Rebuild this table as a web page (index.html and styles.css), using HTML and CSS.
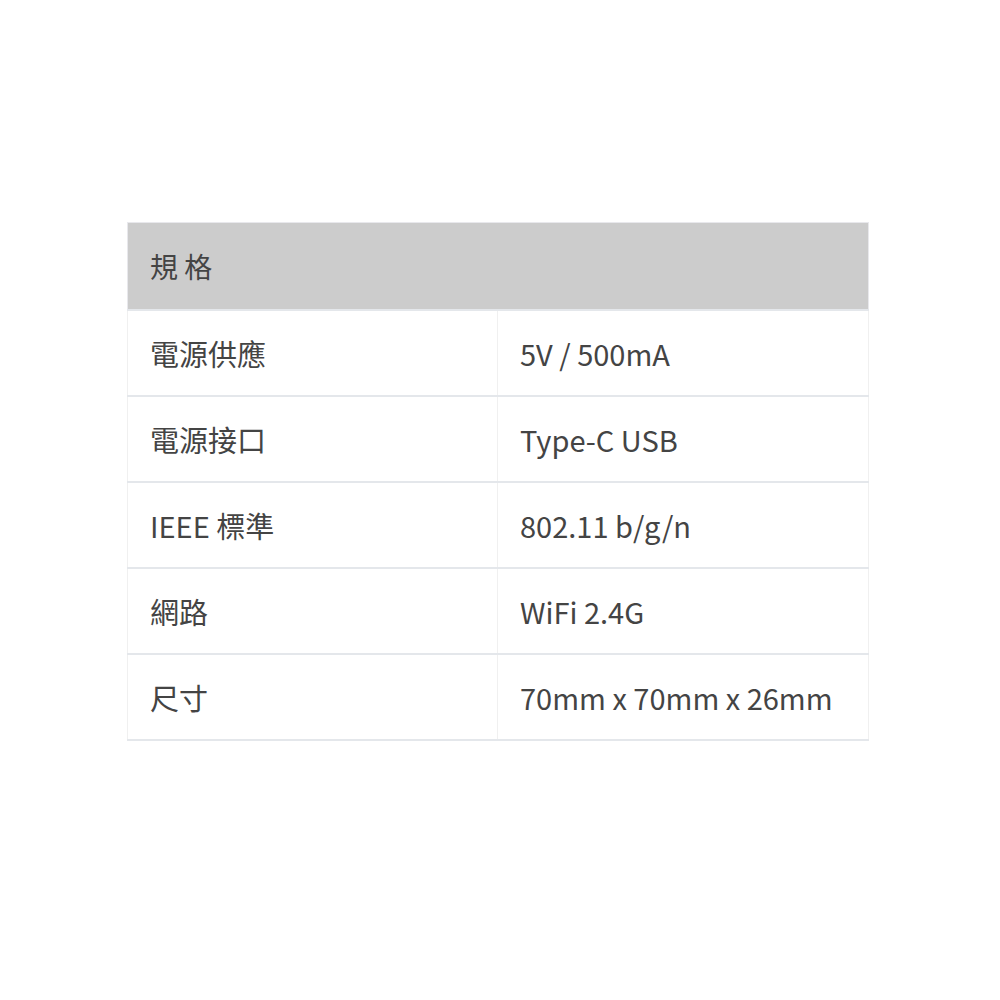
FILE: index.html
```html
<!DOCTYPE html>
<html lang="zh-Hant">
<head>
<meta charset="utf-8">
<link rel="stylesheet" href="styles.css">
</head>
<body>
<div class="wrap">
<table class="spec">
<thead>
<tr><th colspan="2">規 格</th></tr>
</thead>
<tbody>
<tr><td class="k">電源供應</td><td>5V / 500mA</td></tr>
<tr><td class="k">電源接口</td><td>Type-C USB</td></tr>
<tr><td class="k">IEEE 標準</td><td>802.11 b/g/n</td></tr>
<tr><td class="k">網路</td><td>WiFi 2.4G</td></tr>
<tr><td class="k">尺寸</td><td>70mm x 70mm x 26mm</td></tr>
</tbody>
</table>
</div>
</body>
</html>
```
FILE: styles.css
```css
html, body {
  margin: 0;
  background: #fff;
}
.wrap {
  padding: 222px 0 0 127px;
}
.spec {
  width: 742px;
  border-collapse: collapse;
  font-family: "Noto Sans CJK TC", "Noto Sans", sans-serif;
  font-size: 29px;
  color: #444;
  border: 1px solid #eeeeee;
}
.spec th {
  background: #cccccc;
  text-align: left;
  font-weight: 400;
  font-size: 28px;
  height: 87px;
  padding: 0 22px;
  border: 1px solid #e8e8ec;
  box-sizing: border-box;
}
.spec td {
  height: 86px;
  padding: 0 22px;
  border-top: 2px solid #e4e7eb;
  border-bottom: 2px solid #e4e7eb;
  border-left: 1px solid #f0f0f0;
  border-right: 1px solid #f0f0f0;
  box-sizing: border-box;
  vertical-align: middle;
}
.spec td.k {
  width: 370px;
}
```
